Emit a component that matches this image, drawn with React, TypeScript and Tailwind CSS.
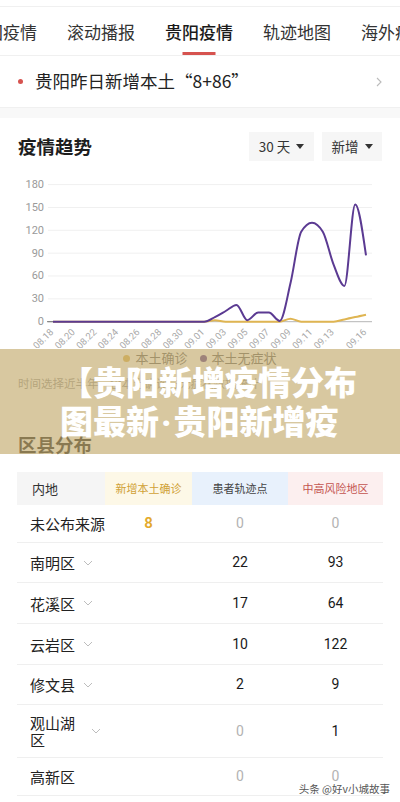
import React from "react";

const tabs = ["全国疫情", "滚动播报", "贵阳疫情", "轨迹地图", "海外疫情"];

// chart geometry (svg top sits at page y=170)
const X0 = 53;
const STEP = (366 - 53) / 29;
const Y0 = 151.7;
const K = 0.7617;
const px = (d: number) => X0 + d * STEP;
const py = (v: number) => Y0 - v * K;

const purple = [
  0, 0, 0, 0, 0, 0, 0, 0, 0, 0, 0, 0, 0, 0, 0, 6, 14, 22, 2, 12, 12, 1, 50, 118, 130, 118, 75, 47, 154, 87,
];
const yellow = [
  0, 0, 0, 0, 0, 0, 0, 0, 0, 0, 0, 0, 0, 0, 0, 2, 0, 0, 0, 0, 0, 0, 4, 0, 0, 0, 0, 3, 6, 9,
];

// monotone cubic, like d3 curveMonotoneX
function linePath(vals: number[]) {
  const pts = vals.map((v, i) => [px(i), py(v)]);
  const n = pts.length;
  const h = STEP;
  const s: number[] = [];
  for (let i = 0; i < n - 1; i++) s.push((pts[i + 1][1] - pts[i][1]) / h);
  const t: number[] = new Array(n).fill(0);
  for (let i = 1; i < n - 1; i++) {
    const s0 = s[i - 1];
    const s1 = s[i];
    const p = (s0 + s1) / 2;
    t[i] = (Math.sign(s0) + Math.sign(s1)) * Math.min(Math.abs(s0), Math.abs(s1), 0.5 * Math.abs(p)) || 0;
  }
  t[0] = (3 * s[0] - t[1]) / 2;
  t[n - 1] = (3 * s[n - 2] - t[n - 2]) / 2;
  let d = `M${pts[0][0].toFixed(1)},${pts[0][1].toFixed(1)}`;
  for (let i = 0; i < n - 1; i++) {
    const [x0, y0] = pts[i];
    const [x1, y1] = pts[i + 1];
    d += ` C${(x0 + h / 3).toFixed(1)},${(y0 + (t[i] * h) / 3).toFixed(1)} ${(x1 - h / 3).toFixed(1)},${(
      y1 - (t[i + 1] * h) / 3
    ).toFixed(1)} ${x1.toFixed(1)},${y1.toFixed(1)}`;
  }
  return d;
}

const xLabels: [number, string][] = [
  [0, "08.18"], [2, "08.20"], [4, "08.22"], [6, "08.24"], [8, "08.26"], [10, "08.28"], [12, "08.30"],
  [14, "09.01"], [16, "09.03"], [18, "09.05"], [20, "09.07"], [22, "09.09"], [24, "09.11"], [26, "09.13"],
  [29, "09.16"],
];

const TrendChart = () => (
  <svg width="400" height="178" className="block font-['Roboto',sans-serif]">
    {[180, 150, 120, 90, 60, 30].map((v) => (
      <line key={v} x1="48" x2="372" y1={py(v)} y2={py(v)} stroke="#f0f0f0" strokeWidth="1" />
    ))}
    <line x1="48" x2="372" y1={Y0} y2={Y0} stroke="#b5b5b5" strokeWidth="1" />
    <line x1="47" x2="53" y1={Y0} y2={Y0} stroke="#777" strokeWidth="1" />
    {[180, 150, 120, 90, 60, 30, 0].map((v) => (
      <text key={v} x="44" y={py(v) + 3.5} textAnchor="end" fontSize="11" fill="#9a9a9a">
        {v}
      </text>
    ))}
    {xLabels.map(([d, l]) => (
      <text
        key={l}
        x={px(d) + 1}
        y={Y0 + 11}
        textAnchor="end"
        fontSize="9.5"
        fill="#a8a8a8"
        transform={`rotate(-45 ${px(d) + 1} ${Y0 + 11})`}
      >
        {l}
      </text>
    ))}
    <path d={linePath(yellow)} fill="none" stroke="#dfb552" strokeWidth="2" />
    <path d={linePath(purple)} fill="none" stroke="#5b3a92" strokeWidth="2" />
  </svg>
);

const Caret = () => <span className="ml-[6px] inline-block h-0 w-0 border-x-[4px] border-t-[5px] border-x-transparent border-t-[#333]" />;

const ChevronDown = () => (
  <svg width="10" height="6" viewBox="0 0 10 6" className="shrink-0">
    <polyline points="1,1 5,5 9,1" fill="none" stroke="#bdbdbd" strokeWidth="1" />
  </svg>
);

const rows = [
  { name: "未公布来源", a: "8", b: "0", c: "0", arrow: false, h: "h-[38px]" },
  { name: "南明区", a: "", b: "22", c: "93", arrow: true, h: "h-[40px]" },
  { name: "花溪区", a: "", b: "17", c: "64", arrow: true, h: "h-[41px]" },
  { name: "云岩区", a: "", b: "10", c: "122", arrow: true, h: "h-[41px]" },
  { name: "修文县", a: "", b: "2", c: "9", arrow: true, h: "h-[40px]" },
  { name: "观山湖区", a: "", b: "0", c: "1", arrow: true, h: "h-[53px]" },
  { name: "高新区", a: "", b: "0", c: "0", arrow: false, h: "h-[38px]" },
];

const Num = ({ v }: { v: string }) => (
  <div
    className={`text-center font-['Roboto',sans-serif] text-[14px] ${
      v === "0" ? "text-[#b3b3b3]" : "text-[#1a1a1a]"
    }`}
  >
    {v}
  </div>
);

export default function App() {
  return (
    <div className="relative h-[802px] w-[400px] overflow-hidden bg-white text-[#222] [font-family:'Noto_Sans_CJK_SC','Noto_Sans',sans-serif]">
      <div className="h-[6px]" />
      {/* tabs */}
      <div className="h-[50px] overflow-hidden border-y border-[#f0f0f0]">
        <div className="-ml-[31px] flex gap-[30px] whitespace-nowrap">
          {tabs.map((t) => (
            <div key={t} className="relative h-[48px] shrink-0 pt-[13px]">
              <span className={`text-[17px] leading-[22px] ${t === "贵阳疫情" ? "font-medium text-[#1a1a1a]" : "text-[#333]"}`}>{t}</span>
              {t === "贵阳疫情" && (
                <div className="absolute bottom-0 left-1/2 h-[3px] w-[33px] -translate-x-1/2 bg-[#d6534f]" />
              )}
            </div>
          ))}
        </div>
      </div>
      {/* headline */}
      <div className="flex h-[52px] items-center border-b border-[#f0f0f0] pl-[18px] pr-[18px]">
        <span className="h-[5px] w-[5px] rounded-full bg-[#d6534f]" />
        <span className="ml-[12px] text-[17.5px] text-[#222]">贵阳昨日新增本土“8+86”</span>
        <svg width="6" height="10" viewBox="0 0 6 10" className="ml-auto">
          <polyline points="1,1 5,5 1,9" fill="none" stroke="#bbb" strokeWidth="1.1" />
        </svg>
      </div>
      <div className="h-[10px] bg-[#f8f8f8]" />

      {/* trend */}
      <div className="mt-[14px] flex h-[29px] items-center px-[18px]">
        <div className="text-[18.5px] font-bold text-[#1e1e1e]">疫情趋势</div>
        <div className="ml-auto flex h-full gap-[8px]">
          <div className="flex w-[65px] items-center justify-center bg-[#f6f6f6] text-[13.5px] text-[#333]">
            30 天<Caret />
          </div>
          <div className="flex w-[60px] items-center justify-center bg-[#f6f6f6] text-[13.5px] text-[#333]">
            新增<Caret />
          </div>
        </div>
      </div>
      <div className="mt-[9px]">
        <TrendChart />
      </div>
      <div className="flex h-[20px] items-center justify-center gap-[12px] text-[13px] text-[#666]">
        <div className="flex items-center gap-[5px]">
          <span className="h-[7px] w-[7px] rounded-full bg-[#dfb552]" />
          本土确诊
        </div>
        <div className="flex items-center gap-[5px]">
          <span className="h-[7px] w-[7px] rounded-full bg-[#5b3a92]" />
          本土无症状
        </div>
      </div>
      <div className="mt-[6px] pl-[18px] text-[11.5px] leading-[18px] text-[#999]">
        时间选择近半年，含本土确诊与无症状数据统计
      </div>
      <div className="mt-[39px] pl-[18px] text-[18.5px] font-bold leading-[26px] text-[#1e1e1e]">区县分布</div>

      {/* table */}
      <div className="mx-[17px] mt-[15px]">
        <div className="grid h-[33px] grid-cols-[88px_87px_96px_95px]">
          <div className="flex items-center bg-[#f5f5f5] pl-[15px] text-[13px] text-[#333]">内地</div>
          <div className="flex items-center justify-center bg-[#fdf8e7] text-[11px] text-[#d0a136]">新增本土确诊</div>
          <div className="flex items-center justify-center bg-[#e8f1fc] text-[11px] text-[#444]">患者轨迹点</div>
          <div className="flex items-center justify-center bg-[#fcefef] text-[11px] text-[#c4544f]">中高风险地区</div>
        </div>
        {rows.map((r) => (
          <div key={r.name} className={`grid grid-cols-[88px_87px_96px_95px] items-center border-b border-[#efefef] ${r.h}`}>
            <div className="flex items-center pl-[13px] pr-[4px]">
              <span className={`min-w-0 text-[15px] leading-[17px] text-[#222] ${r.arrow ? "" : "whitespace-nowrap"}`}>
                {r.name}
              </span>
              {r.arrow && (
                <span className="ml-[8px] shrink-0">
                  <ChevronDown />
                </span>
              )}
            </div>
            <div className="text-center font-['Roboto',sans-serif] text-[15px] font-semibold text-[#e3a92b]">{r.a}</div>
            <Num v={r.b} />
            <Num v={r.c} />
          </div>
        ))}
      </div>

      {/* watermark */}
      <div className="absolute right-[10px] top-[781px] text-[10.5px] text-[#555] [text-shadow:0_0_2px_#fff,0_0_2px_#fff]">
        头条 @好v小城故事
      </div>

      {/* title overlay */}
      <div className="absolute left-0 right-0 top-[349px] flex h-[105px] flex-col justify-center bg-[#c3ab6d]/65 pl-[60px]">
        <div className="whitespace-nowrap text-[33px] font-black leading-[39px] text-white">【贵阳新增疫情分布</div>
        <div className="whitespace-nowrap text-[33px] font-black leading-[39px] text-white">
          图最新<span className="mx-[2px] font-['Roboto',sans-serif]">·</span>贵阳新增疫
        </div>
      </div>
    </div>
  );
}
